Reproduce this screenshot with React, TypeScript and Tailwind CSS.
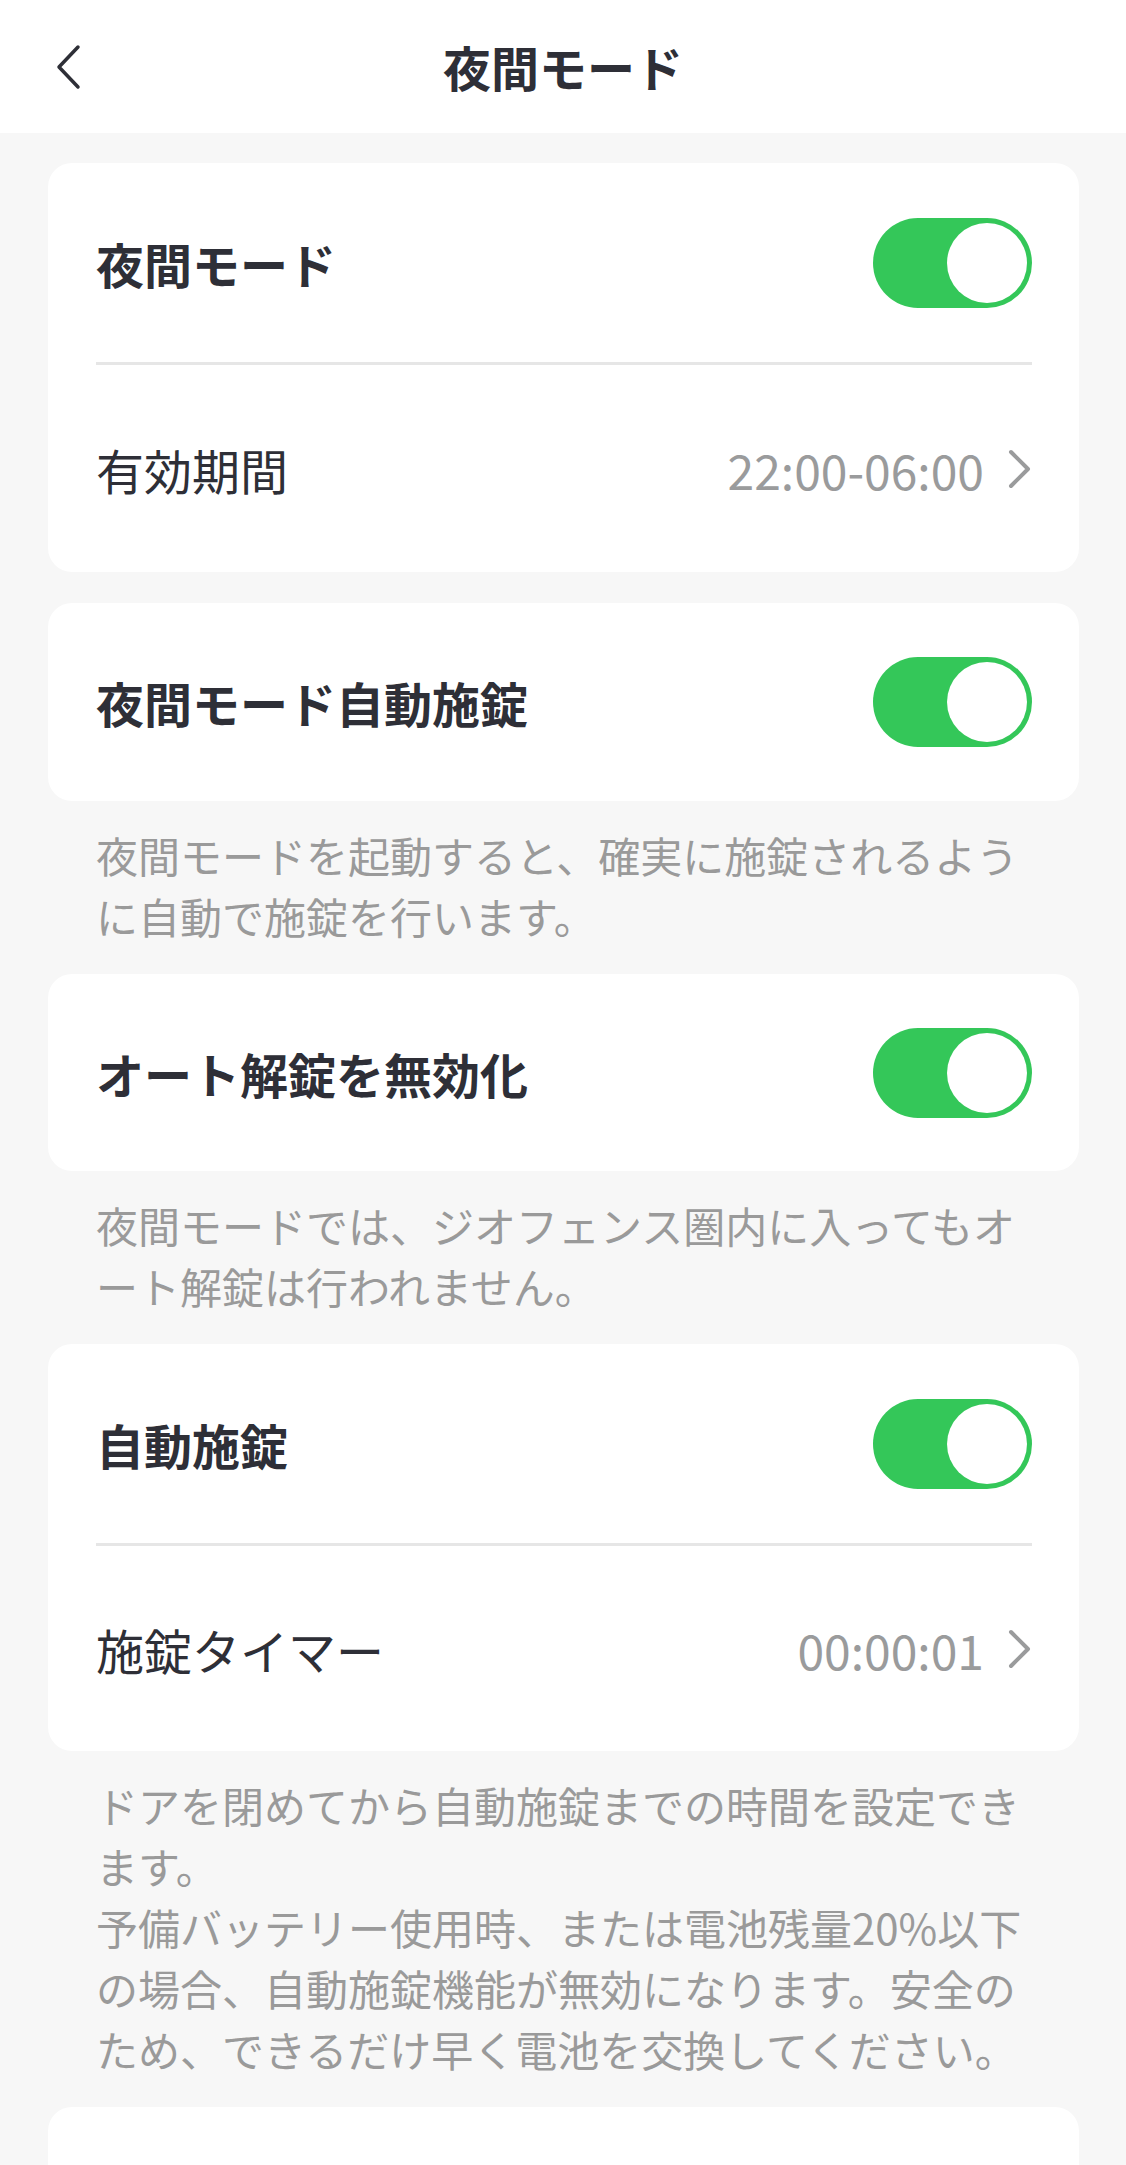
import React from "react";

function Toggle() {
  return (
    <div className="w-[159px] h-[90px] rounded-full bg-[#34c759] p-[5px] flex justify-end shrink-0">
      <div className="w-[80px] h-[80px] rounded-full bg-white" />
    </div>
  );
}

function Chevron() {
  return (
    <svg width="26" height="40" viewBox="0 0 26 40" className="shrink-0">
      <polyline
        points="5,3 22,20 5,37"
        fill="none"
        stroke="#9a9b9c"
        strokeWidth="4"
        strokeLinecap="round"
        strokeLinejoin="round"
      />
    </svg>
  );
}

function ToggleRow({ label }: { label: string }) {
  return (
    <div className="flex items-center justify-between h-[199px] pl-[48px] pr-[47px]">
      <span className="text-[48px] leading-none font-bold text-[#2e2f37]">{label}</span>
      <Toggle />
    </div>
  );
}

function ValueRow({ label, value, h }: { label: string; value: string; h: string }) {
  return (
    <div className={`flex items-center justify-between pl-[48px] pr-[47px] ${h}`}>
      <span className="text-[48px] leading-none text-[#2e2f37]">{label}</span>
      <div className="flex items-center gap-[22px]">
        <span className="text-[48px] leading-none text-[#9a9b9c]">{value}</span>
        <Chevron />
      </div>
    </div>
  );
}

function Divider() {
  return <div className="ml-[48px] mr-[47px] h-[3px] bg-[#e6e6e6]" />;
}

function Desc({ lines }: { lines: string[] }) {
  return (
    <div className="px-[48px] pt-[23px] pb-[28px] text-[42px] leading-[61px] text-[#9a9a9a] whitespace-nowrap">
      {lines.map((l, i) => (
        <div key={i}>{l}</div>
      ))}
    </div>
  );
}

export default function App() {
  return (
    <div className="w-[1126px] h-[2165px] overflow-hidden bg-[#f7f7f7] font-['Noto_Sans_CJK_JP',sans-serif]">
      <header className="relative h-[133px] bg-white flex items-center justify-center">
        <svg
          width="30"
          height="46"
          viewBox="0 0 30 46"
          className="absolute left-[53px] top-[44px]"
        >
          <polyline
            points="25,3 6,23 25,43"
            fill="none"
            stroke="#2e2f37"
            strokeWidth="3.5"
            strokeLinecap="round"
            strokeLinejoin="round"
          />
        </svg>
        <h1 className="text-[48px] leading-none font-bold text-[#2e2f37] -mt-[2px]">夜間モード</h1>
      </header>

      <main className="pl-[48px] pr-[47px] pt-[30px]">
        <section className="bg-white rounded-[24px]">
          <ToggleRow label="夜間モード" />
          <Divider />
          <ValueRow label="有効期間" value="22:00-06:00" h="h-[207px]" />
        </section>

        <section className="bg-white rounded-[24px] mt-[31px]">
          <div className="h-[198px] flex items-center justify-between pl-[48px] pr-[47px]">
            <span className="text-[48px] leading-none font-bold text-[#2e2f37]">夜間モード自動施錠</span>
            <Toggle />
          </div>
        </section>
        <Desc
          lines={[
            "夜間モードを起動すると、確実に施錠されるよう",
            "に自動で施錠を行います。",
          ]}
        />

        <section className="bg-white rounded-[24px]">
          <div className="h-[197px] flex items-center justify-between pl-[48px] pr-[47px]">
            <span className="text-[48px] leading-none font-bold text-[#2e2f37]">オート解錠を無効化</span>
            <Toggle />
          </div>
        </section>
        <Desc
          lines={[
            "夜間モードでは、ジオフェンス圏内に入ってもオ",
            "ート解錠は行われません。",
          ]}
        />

        <section className="bg-white rounded-[24px]">
          <ToggleRow label="自動施錠" />
          <Divider />
          <ValueRow label="施錠タイマー" value="00:00:01" h="h-[205px]" />
        </section>
        <Desc
          lines={[
            "ドアを閉めてから自動施錠までの時間を設定でき",
            "ます。",
            "予備バッテリー使用時、または電池残量20%以下",
            "の場合、自動施錠機能が無効になります。安全の",
            "ため、できるだけ早く電池を交換してください。",
          ]}
        />

        <section className="bg-white rounded-[24px] h-[198px]" />
      </main>
    </div>
  );
}
